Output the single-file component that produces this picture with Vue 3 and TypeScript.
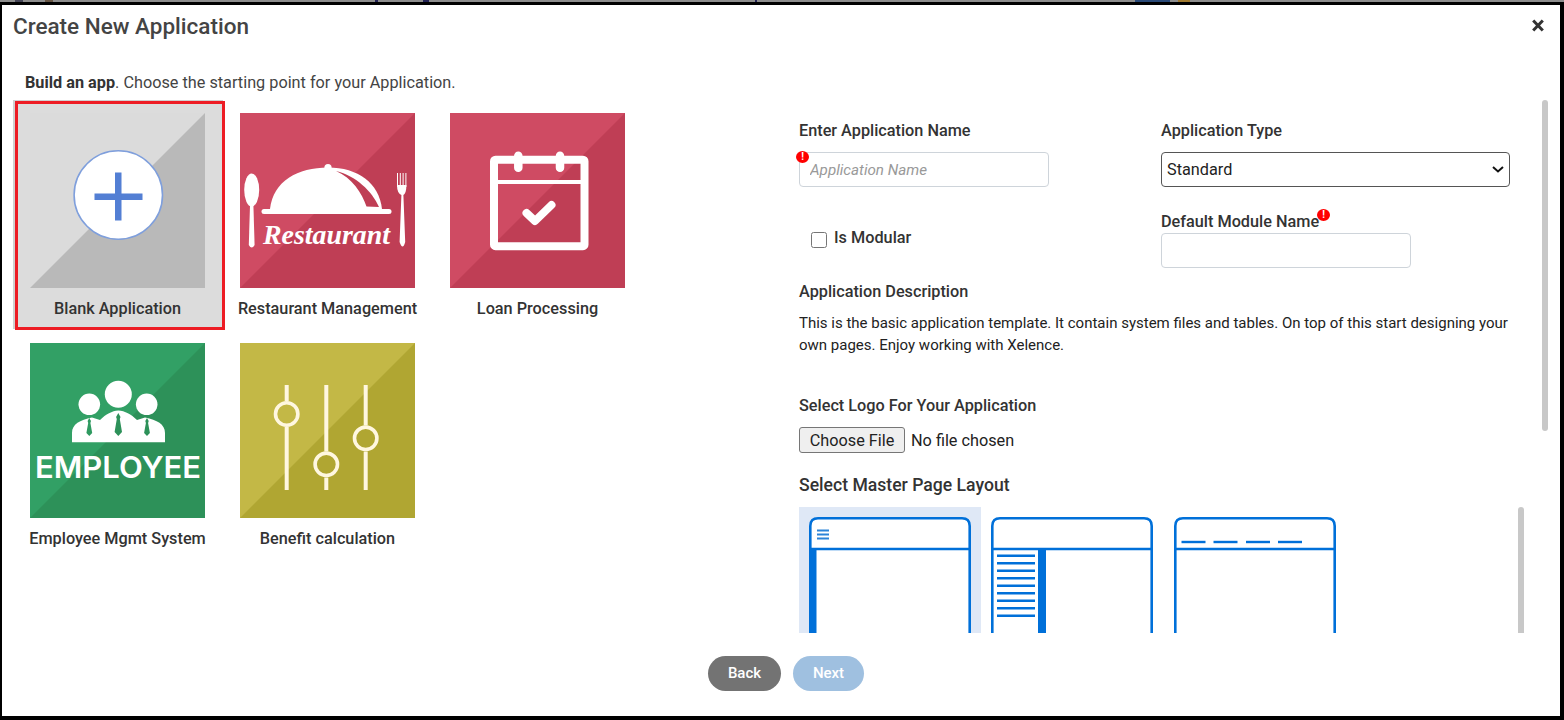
<script setup lang="ts">
const menuLines: number[] = [38.7, 46.3, 53.7, 61.3, 68.7, 76.3, 83.7, 91.3, 98.7]
const tabDashes: number[] = [7.5, 39.5, 72, 104]
const stripBits: { gap: number; width: number; color: string }[] = [
  { gap: 15, width: 8, color: '#445' },
  { gap: 22, width: 8, color: '#654' },
  { gap: 322, width: 3, color: '#225' },
  { gap: 45, width: 6, color: '#225' },
  { gap: 326, width: 2, color: '#225' },
  { gap: 378, width: 35, color: '#2a4a78' },
  { gap: 8, width: 12, color: '#a07a30' },
]
</script>

<template>
  <div class="page">
    <div class="strip">
      <span
        v-for="(b, i) in stripBits"
        :key="i"
        class="bit"
        :style="{ marginLeft: b.gap + 'px', width: b.width + 'px', background: b.color }"
      ></span>
    </div>
    <div class="modal">
      <header class="head">
        <h1 class="title">Create New Application</h1>
        <button class="close" aria-label="Close">
          <svg width="12" height="13" viewBox="0 0 12 13">
            <path d="M1.2 1.5 10.8 11.5M10.8 1.5 1.2 11.5" stroke="#333" stroke-width="3" fill="none" />
          </svg>
        </button>
      </header>
      <p class="intro"><b>Build an app</b>. Choose the starting point for your Application.</p>

      <div class="body">
        <section class="tiles">
          <div class="tile selected">
            <svg class="art" viewBox="0 0 175 175">
              <rect width="175" height="175" fill="#dbdbdb" />
              <polygon points="175,0 175,175 0,175" fill="#b9b9b9" />
              <circle cx="88.3" cy="82" r="44.2" fill="#fff" stroke="#7f9fdc" stroke-width="1.6" />
              <rect x="64.5" y="80.5" width="48" height="6.5" fill="#537fd4" />
              <rect x="85" y="59.5" width="6.5" height="48" fill="#537fd4" />
            </svg>
            <span class="name">Blank Application</span>
          </div>

          <div class="tile">
            <svg class="art" viewBox="0 0 175 175">
              <rect width="175" height="175" fill="#cf4b63" />
              <polygon points="175,0 175,175 0,175" fill="#bf3e55" />
              <ellipse cx="11.7" cy="77" rx="7.500" ry="16.500" fill="#fff" />
              <path d="M10 92h3.400l1.200 40q-2.900 5-5.800 0z" fill="#fff" />
              <path d="M157.500 60v14M160.300 60v14M163.100 60v14M165.900 60v14" stroke="#fff" stroke-width="1" />
              <path d="M157 72h9.400q0 8-3 10l1.800 47q-2.500 9-5.600 0l1.800-47q-4.400-2-4.400-10z" fill="#fff" />
              <circle cx="88" cy="54.500" r="3.600" fill="#fff" />
              <path d="M30 96C33 68 58 54.500 88 54.500 118 54.500 139 70 142 96z" fill="#fff" />
              <path d="M96 58C112 65 122 80 126.500 93.500L139 94C132 78 116 63 96 58z" fill="#bf3e55" />
              <rect x="21.500" y="96" width="130" height="5" rx="2.500" fill="#fff" />
              <text x="23" y="131" class="script" textLength="127" lengthAdjust="spacingAndGlyphs">Restaurant</text>
            </svg>
            <span class="name">Restaurant Management</span>
          </div>

          <div class="tile">
            <svg class="art" viewBox="0 0 175 175">
              <rect width="175" height="175" fill="#cf4b63" />
              <polygon points="175,0 175,175 0,175" fill="#bf3e55" />
              <rect x="44" y="46.700" width="90.500" height="86.500" rx="1.500" fill="none" stroke="#fff" stroke-width="8" />
              <path d="M44 69H134" stroke="#fff" stroke-width="4" />
              <path d="M68.300 42.700V54.700M110 42.700V54.700" stroke="#fff" stroke-width="8.500" stroke-linecap="round" />
              <path d="M76.500 100 85 108 101.500 92" fill="none" stroke="#fff" stroke-width="8" stroke-linecap="round" stroke-linejoin="round" />
            </svg>
            <span class="name">Loan Processing</span>
          </div>

          <div class="tile">
            <svg class="art" viewBox="0 0 175 175">
              <rect width="175" height="175" fill="#32a065" />
              <polygon points="175,0 175,175 0,175" fill="#2d9159" />
              <circle cx="88.300" cy="51.300" r="13.500" fill="#fff" />
              <circle cx="59.300" cy="61.300" r="10.800" fill="#fff" />
              <circle cx="116.700" cy="61.300" r="10.800" fill="#fff" />
              <path d="M42 99.300V90C42 81 50 77 62 74.500L70 77C76 71 82 68 88.300 67.500 95 68 101 71 107 77L115 74.500C127 77 135 81 135 90V99.300z" fill="#fff" />
              <path d="M88.300 70 90.500 74 89.800 76 92 89 88.300 93 84.600 89 86.800 76 86.100 74z" fill="#2d9159" />
              <path d="M59.300 75 61 78 60.400 80 62.200 90 59.300 93 56.400 90 58.200 80 57.600 78z" fill="#2f9a60" />
              <path d="M117 75 118.700 78 118.100 80 119.900 90 117 93 114.100 90 115.900 80 115.300 78z" fill="#2d9159" />
              <text x="5" y="135.300" class="emp" textLength="166" lengthAdjust="spacingAndGlyphs">EMPLOYEE</text>
            </svg>
            <span class="name">Employee Mgmt System</span>
          </div>

          <div class="tile">
            <svg class="art" viewBox="0 0 175 175">
              <rect width="175" height="175" fill="#c3b846" />
              <polygon points="175,0 175,175 0,175" fill="#b0a632" />
              <path d="M46.700 42V58M46.700 84V147M86.300 42V108.500M86.300 134.500V147M125.700 42V82.500M125.700 108.500V147" stroke="#fff7e0" stroke-width="4" />
              <circle cx="46.700" cy="71" r="11.200" fill="none" stroke="#fff7e0" stroke-width="3.600" />
              <circle cx="86.300" cy="121.300" r="11.200" fill="none" stroke="#fff7e0" stroke-width="3.600" />
              <circle cx="125.700" cy="95.300" r="11.200" fill="none" stroke="#fff7e0" stroke-width="3.600" />
            </svg>
            <span class="name">Benefit calculation</span>
          </div>
        </section>

        <section class="form">
          <div class="form-grid">
            <div class="field">
              <label class="lbl">Enter Application Name</label>
              <div class="ctl">
                <input class="text" type="text" placeholder="Application Name" />
                <span class="req req-input">!</span>
              </div>
            </div>
            <div class="field">
              <label class="lbl">Application Type</label>
              <div class="ctl">
                <select class="sel">
                  <option>Standard</option>
                </select>
                <svg class="chev" width="12" height="7" viewBox="0 0 12 7">
                  <path d="M1 1 6 5.500 11 1" fill="none" stroke="#111" stroke-width="2" />
                </svg>
              </div>
            </div>
            <div class="modular">
              <input class="chk" type="checkbox" />
              <span class="lbl mod-text">Is Modular</span>
            </div>
            <div class="field">
              <label class="lbl mod">Default Module Name<span class="req req-label">!</span></label>
              <input class="text" type="text" />
            </div>
          </div>

          <h2 class="lbl desc-h">Application Description</h2>
          <p class="desc">This is the basic application template. It contain system files and tables. On top of this start designing your own pages. Enjoy working with Xelence.</p>

          <label class="lbl logo-h">Select Logo For Your Application</label>
          <input class="file" type="file" />

          <h2 class="master">Select Master Page Layout</h2>
          <div class="layouts">
            <div class="layout active">
              <svg class="thumb" viewBox="0 0 162 126">
                <path d="M1.300 126V9Q1.300 1.300 9 1.300H153Q160.700 1.300 160.700 9V126" fill="#fff" stroke="#0070d9" stroke-width="2.600" />
                <path d="M1 32H161" stroke="#0070d9" stroke-width="2.400" />
                <rect x="0" y="32" width="7.500" height="94" fill="#0070d9" />
                <path d="M8 13.500H20M8 17.500H20M8 21.500H20" stroke="#2b83d8" stroke-width="2" />
              </svg>
            </div>
            <div class="layout">
              <svg class="thumb" viewBox="0 0 162 126">
                <path d="M1.300 126V9Q1.300 1.300 9 1.300H153Q160.700 1.300 160.700 9V126" fill="#fff" stroke="#0070d9" stroke-width="2.600" />
                <path d="M1 32H161" stroke="#0070d9" stroke-width="2.400" />
                <rect x="47" y="32" width="8" height="94" fill="#0070d9" />
                <path v-for="y in menuLines" :key="y" :d="`M6 ${y}H44`" stroke="#0070d9" stroke-width="2.400" />
              </svg>
            </div>
            <div class="layout">
              <svg class="thumb" viewBox="0 0 162 126">
                <path d="M1.300 126V9Q1.300 1.300 9 1.300H153Q160.700 1.300 160.700 9V126" fill="#fff" stroke="#0070d9" stroke-width="2.600" />
                <path d="M1 32H161" stroke="#0070d9" stroke-width="2.400" />
                <path v-for="x in tabDashes" :key="x" :d="`M${x} 25H${x + 24}`" stroke="#0070d9" stroke-width="2.400" />
              </svg>
            </div>
          </div>
          <span class="bar bar-outer"></span>
          <span class="bar bar-inner"></span>
        </section>
      </div>

      <footer class="foot">
        <button class="btn back">Back</button>
        <button class="btn next">Next</button>
      </footer>
    </div>
  </div>
</template>

<style>
html,
body {
  margin: 0;
  background: #fff;
}
</style>

<style scoped>
.page {
  width: 1564px;
  height: 720px;
  overflow: hidden;
  display: flex;
  flex-direction: column;
  background: #fff;
  font-family: Roboto, "Liberation Sans", sans-serif;
  color: #333;
}
.strip {
  height: 2px;
  flex: none;
  display: flex;
  background: #8d8d8d;
}
.bit {
  display: block;
  height: 2px;
}
.modal {
  flex: 1;
  min-height: 0;
  display: flex;
  flex-direction: column;
  box-sizing: border-box;
  border: solid #000;
  border-width: 3px 4px 4px 2px;
  background: #fff;
}
.head {
  height: 42px;
  flex: none;
  display: flex;
  align-items: center;
  justify-content: space-between;
  padding: 0 16px 0 11px;
}
.title {
  margin: 0;
  font-size: 22.500px;
  font-weight: 500;
  color: #444;
}
.close {
  display: flex;
  padding: 0;
  border: 0;
  background: none;
  margin-top: -2px;
}
.intro {
  margin: 25px 0 0 23px;
  height: 20px;
  line-height: 22px;
  font-size: 16.250px;
  color: #444;
  flex: none;
}
.intro b {
  font-weight: 700;
  color: #333;
}
.body {
  position: relative;
  height: 533px;
  margin-top: 8px;
  flex: none;
  display: flex;
}
.tiles {
  width: 778px;
  margin-left: 13px;
  flex: none;
  display: grid;
  grid-template-columns: repeat(3, 210px);
  grid-auto-rows: 230px;
  align-content: start;
}
.tile {
  box-sizing: border-box;
  padding: 13px 20px 0 15px;
  display: flex;
  flex-direction: column;
  align-items: center;
}
.tile.selected {
  margin-top: 1px;
  padding-top: 12px;
  background: #dcdcdc;
  outline: 3px solid #ed1c24;
  outline-offset: -3px;
  box-shadow: -2px -1px 0 #d0d0d0;
}
.art {
  width: 175px;
  height: 175px;
  flex: none;
  display: block;
}
.name {
  margin-top: 10px;
  height: 20px;
  line-height: 22px;
  font-size: 16.250px;
  font-weight: 500;
  color: #333;
  white-space: nowrap;
}
.script {
  font-family: "Liberation Serif", serif;
  font-style: italic;
  font-weight: 700;
  font-size: 28px;
  fill: #fff;
}
.emp {
  font-family: Inter, sans-serif;
  font-weight: 600;
  font-size: 30px;
  fill: #fff;
}
.form {
  flex: 1;
  min-width: 0;
  padding: 20px 0 0 6px;
  overflow: hidden;
  box-sizing: border-box;
}
.form-grid {
  display: grid;
  grid-template-columns: 362px 349px;
  row-gap: 24px;
}
.field {
  display: flex;
  flex-direction: column;
  align-items: flex-start;
  gap: 12px;
}
.ctl {
  position: relative;
  display: flex;
}
.lbl {
  display: block;
  margin: 0;
  height: 20px;
  line-height: 22px;
  font-size: 16.250px;
  font-weight: 500;
  color: #333;
}
.lbl.mod {
  position: relative;
  margin-bottom: -10px;
}
.mod-text {
  margin-bottom: 6px;
}
.text {
  box-sizing: border-box;
  width: 250px;
  height: 35px;
  padding: 0 10px;
  border: 1px solid #ced4da;
  border-radius: 4px;
  background: #fff;
  font: 15.200px Roboto, sans-serif;
  outline: none;
}
.text::placeholder {
  color: #999;
  font-style: italic;
}
.sel {
  box-sizing: border-box;
  width: 349px;
  height: 35px;
  padding: 0 5px;
  border: 1px solid #555;
  border-radius: 4px;
  background: #fff;
  font: 16.250px Roboto, sans-serif;
  color: #222;
  appearance: none;
}
.chev {
  position: absolute;
  right: 6px;
  top: 14px;
  pointer-events: none;
}
.modular {
  display: flex;
  align-items: center;
  gap: 7px;
  padding-left: 12px;
}
.chk {
  width: 16px;
  height: 16px;
  margin: 1px 0 0;
}
.req {
  position: absolute;
  width: 13px;
  height: 12px;
  border-radius: 50%;
  background: #f00;
  color: #fff;
  font: 700 10px/12px Roboto, sans-serif;
  text-align: center;
}
.req-input {
  left: -3px;
  top: -1px;
}
.req-label {
  right: -11px;
  top: -2px;
}
.desc-h {
  margin-top: 13px;
}
.desc {
  margin: 11px 0 0;
  width: 720px;
  font-size: 15px;
  line-height: 22px;
  color: #222;
}
.logo-h {
  margin-top: 39px;
}
.file {
  display: block;
  margin-top: 12px;
  height: 26px;
  font: 16.250px Roboto, sans-serif;
  color: #222;
}
.file::file-selector-button {
  box-sizing: border-box;
  height: 26px;
  width: 106px;
  margin-right: 6px;
  padding: 0;
  border: 1px solid #767676;
  border-radius: 3px;
  background: #efefef;
  font: 16.250px Roboto, sans-serif;
  color: #222;
}
.master {
  margin: 20px 0 0;
  height: 24px;
  line-height: 24px;
  font-size: 17.600px;
  font-weight: 500;
  color: #333;
}
.layouts {
  display: flex;
  margin-top: 10px;
}
.layout {
  width: 162px;
  padding: 10px 10px 0;
  flex: none;
}
.layout:last-child {
  margin-left: 1px;
}
.layout.active {
  background: #dfe8f6;
}
.thumb {
  display: block;
  width: 162px;
  height: 126px;
}
.bar {
  position: absolute;
  width: 6px;
  border-radius: 3px;
  background: #c8c8c8;
}
.bar-outer {
  left: 1540px;
  top: 0;
  height: 331px;
}
.bar-inner {
  left: 1515.500px;
  top: 407px;
  height: 126px;
  border-radius: 3px 3px 0 0;
}
.foot {
  flex: 1;
  display: flex;
  justify-content: center;
  gap: 12px;
  padding: 23px 0 0 10px;
}
.btn {
  box-sizing: border-box;
  width: 73px;
  height: 35px;
  padding: 0 0 2px;
  border: 0;
  border-radius: 18px;
  color: #fff;
  font: 500 15px Roboto, sans-serif;
}
.back {
  background: #737373;
}
.next {
  width: 71px;
  background: #9fc0e0;
}
</style>
